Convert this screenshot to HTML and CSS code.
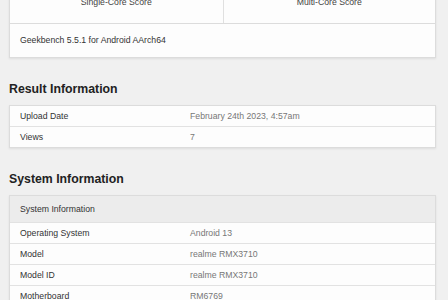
FILE: index.html
```html
<!DOCTYPE html>
<html>
<head>
<meta charset="utf-8">
<link rel="stylesheet" href="styles.css">
</head>
<body>
<div class="page">
  <div class="card top-card">
    <div class="scores">
      <div class="score">Single-Core Score</div>
      <div class="score">Multi-Core Score</div>
    </div>
    <div class="version">Geekbench 5.5.1 for Android AArch64</div>
  </div>

  <h2 class="heading">Result Information</h2>
  <div class="card table">
    <div class="row"><div class="label">Upload Date</div><div class="value">February 24th 2023, 4:57am</div></div>
    <div class="row"><div class="label">Views</div><div class="value">7</div></div>
  </div>

  <h2 class="heading">System Information</h2>
  <div class="card table">
    <div class="row head"><div class="label">System Information</div></div>
    <div class="row"><div class="label">Operating System</div><div class="value">Android 13</div></div>
    <div class="row"><div class="label">Model</div><div class="value">realme RMX3710</div></div>
    <div class="row"><div class="label">Model ID</div><div class="value">realme RMX3710</div></div>
    <div class="row"><div class="label">Motherboard</div><div class="value">RM6769</div></div>
  </div>
</div>
</body>
</html>
```
FILE: styles.css
```css
html, body {
  margin: 0;
  padding: 0;
  background: #f0f0f0;
  font-family: "Liberation Sans", Arial, sans-serif;
  color: #333;
  overflow: hidden;
}
.page {
  width: 427px;
  margin: -20px 0 0 9px;
}
.card {
  background: #fdfdfd;
  border: 1px solid #dcdcdc;
  box-shadow: 0 1px 2px rgba(0,0,0,0.08);
}
.scores {
  display: grid;
  grid-template-columns: 1fr 1fr;
  border-bottom: 1px solid #dcdcdc;
}
.score {
  text-align: center;
  font-size: 8.7px;
  color: #444;
  padding: 16px 0 16px;
  line-height: 10px;
}
.score + .score {
  border-left: 1px solid #e0e0e0;
}
.version {
  font-size: 8.7px;
  line-height: 10px;
  padding: 11px 10px 12px;
  color: #333;
}
.heading {
  font-size: 12.3px;
  font-weight: bold;
  color: #222;
  margin: 24px 0 9px;
  line-height: 14px;
}
.row {
  display: grid;
  grid-template-columns: 170px 1fr;
  font-size: 8.7px;
  line-height: 20px;
  padding: 0 10px;
  border-top: 1px solid #e2e2e2;
}
.row:first-child {
  border-top: none;
}
.row.head {
  background: #ececec;
  line-height: 26px;
  color: #444;
}
.label {
  color: #333;
}
.value {
  color: #777;
}
```
